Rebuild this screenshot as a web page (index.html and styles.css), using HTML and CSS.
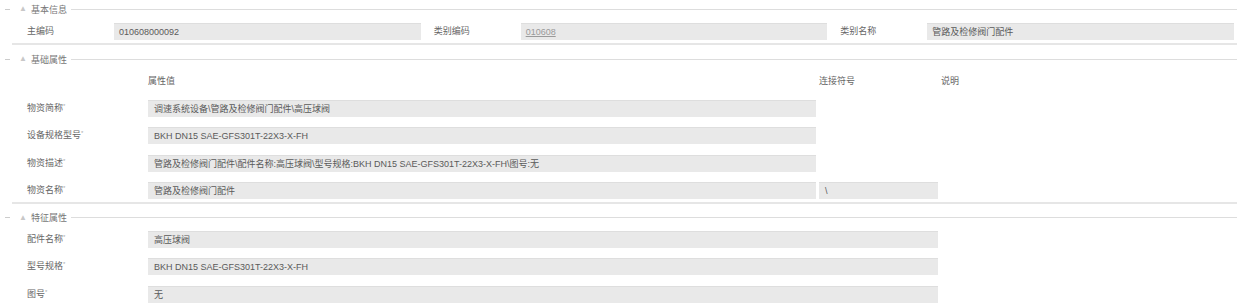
FILE: index.html
```html
<!DOCTYPE html>
<html lang="zh-CN">
<head>
    <meta charset="UTF-8">
    <title>物资信息</title>
    <link rel="stylesheet" href="styles.css">
</head>
<body>
    <div class="section">
        <div class="legend"><span class="dash"></span><span class="arrow">&#9650;</span><span class="title">基本信息</span><span class="rule"></span></div>
        <div class="body">
            <div class="basic">
                <div class="group"><span class="label">主编码</span><div class="field">010608000092</div></div>
                <div class="group"><span class="label">类别编码</span><div class="field"><span class="link">010608</span></div></div>
                <div class="group"><span class="label">类别名称</span><div class="field">管路及检修阀门配件</div></div>
            </div>
        </div>
    </div>

    <div class="section mid">
        <div class="legend"><span class="dash"></span><span class="arrow">&#9650;</span><span class="title">基础属性</span><span class="rule"></span></div>
        <div class="body">
            <div class="attrs">
                <span></span>
                <span class="head">属性值</span>
                <span class="head">连接符号</span>
                <span class="head">说明</span>
            </div>
            <div class="attrs rows">
                <span class="label">物资简称<span class="req">*</span></span>
                <div class="field">调速系统设备\管路及检修阀门配件\高压球阀</div>
                <span></span><span></span>

                <span class="label">设备规格型号<span class="req">*</span></span>
                <div class="field">BKH DN15 SAE-GFS301T-22X3-X-FH</div>
                <span></span><span></span>

                <span class="label">物资描述<span class="req">*</span></span>
                <div class="field">管路及检修阀门配件\配件名称:高压球阀\型号规格:BKH DN15 SAE-GFS301T-22X3-X-FH\图号:无</div>
                <span></span><span></span>

                <span class="label">物资名称<span class="req">*</span></span>
                <div class="field">管路及检修阀门配件</div>
                <div class="field">\</div>
                <span></span>
            </div>
        </div>
    </div>

    <div class="section mid">
        <div class="legend"><span class="dash"></span><span class="arrow">&#9650;</span><span class="title">特征属性</span><span class="rule"></span></div>
        <div class="body">
            <div class="attrs rows feature">
                <span class="label">配件名称<span class="req">*</span></span>
                <div class="field wide">高压球阀</div>
                <span></span>

                <span class="label">型号规格<span class="req">*</span></span>
                <div class="field wide">BKH DN15 SAE-GFS301T-22X3-X-FH</div>
                <span></span>

                <span class="label">图号<span class="req">*</span></span>
                <div class="field wide">无</div>
                <span></span>
            </div>
        </div>
    </div>
</body>
</html>
```

FILE: styles.css
```css
body {
    margin: 0;
    background-color: #fff;
    font-family: "Liberation Sans", "Noto Sans CJK SC", sans-serif;
    font-size: 9px;
    color: #666;
}

/* section header: dash, arrow, title, then a rule to the right */
.legend {
    display: flex;
    align-items: center;
    height: 18px;
    padding-right: 2px;
}

.legend .dash {
    width: 5px;
    height: 1px;
    margin-left: 5px;
    background-color: #ccc;
}

.legend .arrow {
    margin-left: 9px;
    font-size: 8px;
    line-height: 8px;
    color: #c8c8c8;
}

.legend .title {
    margin-left: 4px;
    color: #777;
}

.legend .rule {
    flex: 1;
    height: 1px;
    margin-left: 4px;
    background-color: #ddd;
}

.section.mid {
    margin-top: 5px;
}

.body {
    margin: 0 2px 0 12px;
    padding: 0 3px 3px 15px;
    border-bottom: 2px solid #e6e6e6;
}

.field {
    height: 17px;
    box-sizing: border-box;
    padding: 0 6px;
    line-height: 16px;
    background-color: #e9e9e9;
    border-top: 1px solid #dedede;
    color: #5a5a5a;
    white-space: nowrap;
    overflow: hidden;
}

.label {
    line-height: 17px;
}

.req {
    font-size: 6px;
    vertical-align: top;
    line-height: 12px;
    color: #aaa;
}

.link {
    color: #9a9a9a;
    text-decoration: underline;
}

/* basic info: three label/value groups */
.basic {
    display: grid;
    grid-template-columns: repeat(3, 1fr);
    column-gap: 13px;
    padding-top: 5px;
}

.basic .group {
    display: flex;
}

.basic .label {
    width: 87px;
    flex: none;
}

.basic .field {
    flex: 1;
    padding-left: 5px;
}

/* attributes table */
.attrs {
    display: grid;
    grid-template-columns: 118px 668px 119px 1fr;
    column-gap: 3px;
}

.attrs .head {
    line-height: 26px;
}

.attrs.rows {
    row-gap: 10.3px;
    padding-top: 6px;
}

.attrs.feature {
    padding-top: 4px;
    row-gap: 10.5px;
}

.attrs .field.wide {
    grid-column: span 2;
}
```
